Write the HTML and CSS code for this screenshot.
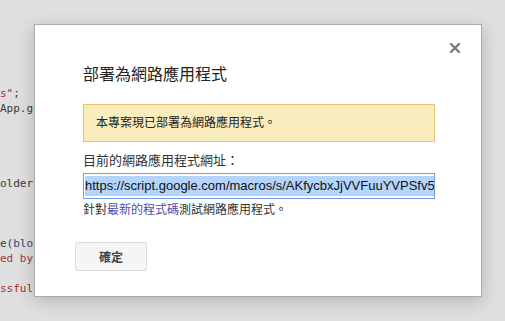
FILE: index.html
```html
<!DOCTYPE html>
<html lang="zh-Hant">
<head>
    <meta charset="UTF-8">
    <meta name="viewport" content="width=device-width, initial-scale=1.0">
    <title>部署為網路應用程式</title>
    <link rel="stylesheet" href="styles.css">
</head>
<body>

    <!-- Code de l'éditeur derrière la fenêtre -->
    <pre class="code"><span class="str">s"</span>;
App.g




<span class="dim">older</span>



e(<span class="var">blo</span>
<span class="str">ed by</span>

<span class="str">ssful</span></pre>

    <!-- Fenêtre de dialogue -->
    <div class="dialog">
        <a href="#" class="close" title="關閉">
            <svg width="10" height="10" viewBox="0 0 10 10">
                <path d="M1 1 L9 9 M9 1 L1 9" stroke="#777" stroke-width="2.2" stroke-linecap="square"/>
            </svg>
        </a>

        <h2 class="dialog-title">部署為網路應用程式</h2>

        <div class="alert">本專案現已部署為網路應用程式。</div>

        <p class="label">目前的網路應用程式網址：</p>
        <div class="url-field">
            <span class="selected">https://script.google.com/macros/s/AKfycbxJjVVFuuYVPSfv5</span>
        </div>
        <p class="hint">針對<a href="#">最新的程式碼</a>測試網路應用程式。</p>

        <button class="btn">確定</button>
    </div>

</body>
</html>
```

FILE: styles.css
```css
body {
    font-family: "Liberation Sans", Arial, "Noto Sans CJK TC", sans-serif;
    background-color: #dfdfdf;
    margin: 0;
    padding: 0;
    height: 321px;
    overflow: hidden;
}

/* Code derrière */
.code {
    margin: 0;
    padding: 86px 0 0 0;
    font-family: "DejaVu Sans Mono", monospace;
    font-size: 11px;
    line-height: 15px;
    color: #3a3a3a;
}

.code .str {
    color: #a3323a;
}

.code .var {
    color: #2f4a78;
}

/* Fenêtre */
.dialog {
    position: absolute;
    left: 34px;
    top: 24px;
    width: 352px;
    height: 231px;
    padding: 40px 46px 0 48px;
    background: white;
    border: 1px solid #acacac;
    box-shadow: 0px 4px 16px rgba(0, 0, 0, 0.2);
    font-family: "Liberation Sans", Arial, "Noto Sans CJK TC", sans-serif;
}

.close {
    position: absolute;
    top: 18px;
    right: 21px;
    display: block;
    width: 10px;
    height: 10px;
}

.close svg {
    display: block;
}

.dialog-title {
    margin: 0 0 19px 0;
    font-size: 16px;
    line-height: 20px;
    font-weight: normal;
    color: #222;
}

.alert {
    background-color: #f9edbe;
    border: 1px solid #f0c36d;
    padding: 10px 12px;
    font-size: 12px;
    line-height: 16px;
    color: #222;
}

.label {
    margin: 10px 0 3px 0;
    font-size: 13px;
    line-height: 18px;
    color: #333;
}

.url-field {
    border: 1px solid #6d9eeb;
    padding: 2px 0 2px 1px;
    overflow: hidden;
    white-space: nowrap;
}

.selected {
    display: block;
    background-color: #b4d4fb;
    font-size: 13px;
    line-height: 20px;
    color: #111;
}

.hint {
    margin: 3px 0 0 0;
    font-size: 12px;
    line-height: 16px;
    color: #333;
}

.hint a {
    color: #4b4bab;
    text-decoration: none;
}

.btn {
    display: block;
    margin: 24px 0 0 -8px;
    width: 72px;
    height: 29px;
    background-color: #f5f5f5;
    border: 1px solid #dcdcdc;
    border-radius: 2px;
    font-family: "Liberation Sans", Arial, "Noto Sans CJK TC", sans-serif;
    font-size: 12px;
    font-weight: bold;
    color: #444;
    cursor: pointer;
}
```
